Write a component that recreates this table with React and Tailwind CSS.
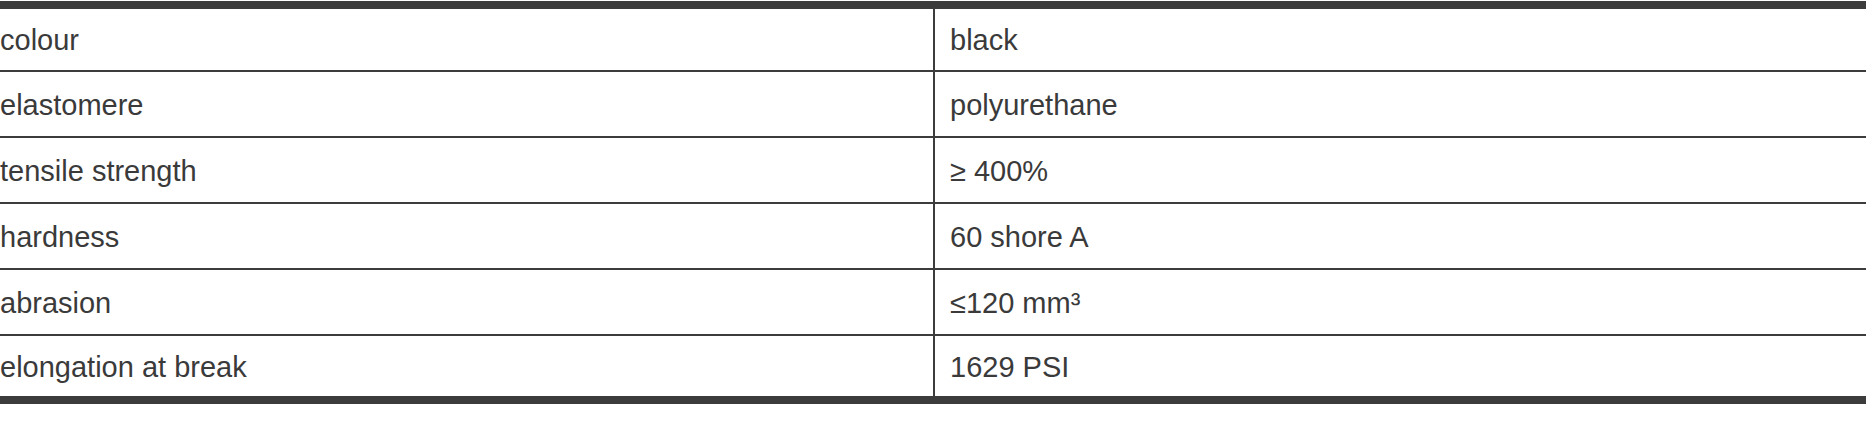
const rows = [
  { label: "colour", value: "black", h: "h-[61px]" },
  { label: "elastomere", value: "polyurethane", h: "h-[64px]" },
  { label: "tensile strength", value: "≥ 400%", h: "h-[64px]" },
  { label: "hardness", value: "60 shore A", h: "h-[64px]" },
  { label: "abrasion", value: "≤120 mm³", h: "h-[64px]" },
  { label: "elongation at break", value: "1629 PSI", h: "h-[60px]" },
];

export default function App() {
  return (
    <div className="min-h-screen bg-white pt-px font-['Liberation_Sans',Arial,sans-serif] text-[29px] text-[#3a3a3a]">
      <div className="border-t-8 border-b-8 border-[#3c3c3c]">
        {rows.map((row, i) => (
          <div
            key={row.label}
            className={`grid grid-cols-2 ${i < rows.length - 1 ? "border-b-2 border-[#3c3c3c]" : ""}`}
          >
            <div className={`flex items-center pt-[3px] ${row.h}`}>{row.label}</div>
            <div className={`flex items-center border-l-2 border-[#3c3c3c] pl-[15px] pt-[3px] ${row.h}`}>
              {row.value}
            </div>
          </div>
        ))}
      </div>
    </div>
  );
}
